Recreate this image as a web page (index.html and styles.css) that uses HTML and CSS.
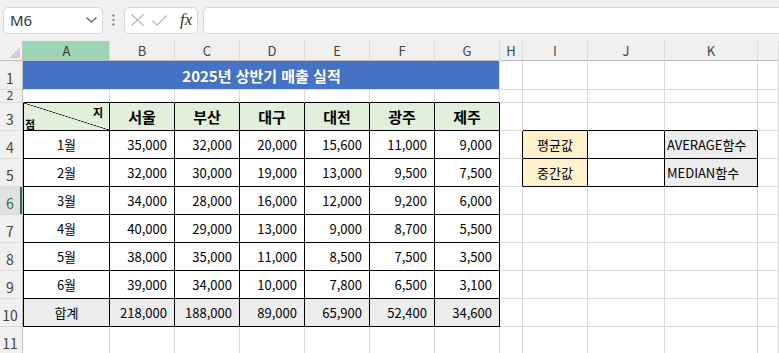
FILE: index.html
```html
<!DOCTYPE html>
<html lang="ko">
<head>
    <meta charset="UTF-8">
    <meta name="viewport" content="width=device-width, initial-scale=1.0">
    <title>2025년 상반기 매출 실적</title>
    <link rel="stylesheet" href="styles.css">
</head>
<body>
    <div class="toolbar">
        <div class="namebox">
            <span>M6</span>
            <svg width="11" height="6" viewBox="0 0 11 6"><polyline points="0.5,0.5 5.5,5 10.5,0.5" fill="none" stroke="#555" stroke-width="1.2"/></svg>
        </div>
        <div class="grip">
            <svg width="3" height="12" viewBox="0 0 3 12"><circle cx="1.5" cy="1.5" r="1.2" fill="#8a8a8a"/><circle cx="1.5" cy="6" r="1.2" fill="#8a8a8a"/><circle cx="1.5" cy="10.5" r="1.2" fill="#8a8a8a"/></svg>
        </div>
        <div class="fxbox">
            <svg width="13" height="12" viewBox="0 0 13 12"><path d="M0.5 0.5 L12.5 11.5 M12.5 0.5 L0.5 11.5" stroke="#b4b4b4" stroke-width="1.1" fill="none"/></svg>
            <svg width="15" height="11" viewBox="0 0 15 11"><polyline points="0.5,5.5 5,10.2 14.5,0.5" fill="none" stroke="#b4b4b4" stroke-width="1.1"/></svg>
            <span class="fx">fx</span>
        </div>
        <div class="formula"></div>
    </div>

    <table class="sheet">
        <tr class="r-ch">
            <th class="corner"><span class="tri"></span></th>
            <th class="ch ch-a">A</th>
            <th class="ch w65">B</th>
            <th class="ch w65">C</th>
            <th class="ch w65">D</th>
            <th class="ch w65">E</th>
            <th class="ch w65">F</th>
            <th class="ch w65">G</th>
            <th class="ch w23">H</th>
            <th class="ch w65">I</th>
            <th class="ch w77">J</th>
            <th class="ch w93">K</th>
            <th class="ch w21"></th>
        </tr>
        <tr class="r-1">
            <th class="rh">1</th>
            <td class="ca title" colspan="7">2025년 상반기 매출 실적</td>
            <td></td><td></td><td></td><td></td><td></td>
        </tr>
        <tr class="r-2">
            <th class="rh">2</th>
            <td class="ca top"></td><td class="top"></td><td class="top"></td><td class="top"></td><td class="top"></td><td class="top"></td><td class="top"></td>
            <td></td><td></td><td></td><td></td><td></td>
        </tr>
        <tr class="r">
            <th class="rh">3</th>
            <td class="ca bx hd diag">
                <div class="split"><span class="s-top">지</span><span class="s-bot">점</span></div>
            </td>
            <td class="bx hd">서울</td>
            <td class="bx hd">부산</td>
            <td class="bx hd">대구</td>
            <td class="bx hd">대전</td>
            <td class="bx hd">광주</td>
            <td class="bx hd">제주</td>
            <td></td><td class="top"></td><td class="top"></td><td class="top"></td><td></td>
        </tr>
        <tr class="r">
            <th class="rh">4</th>
            <td class="ca bx mon">1월</td>
            <td class="bx num">35,000</td><td class="bx num">32,000</td><td class="bx num">20,000</td><td class="bx num">15,600</td><td class="bx num">11,000</td><td class="bx num">9,000</td>
            <td class="edge"></td>
            <td class="bx lbl">평균값</td><td class="bx"></td><td class="bx fn">AVERAGE함수</td>
            <td></td>
        </tr>
        <tr class="r">
            <th class="rh">5</th>
            <td class="ca bx mon">2월</td>
            <td class="bx num">32,000</td><td class="bx num">30,000</td><td class="bx num">19,000</td><td class="bx num">13,000</td><td class="bx num">9,500</td><td class="bx num">7,500</td>
            <td class="edge"></td>
            <td class="bx lbl">중간값</td><td class="bx"></td><td class="bx fn">MEDIAN함수</td>
            <td></td>
        </tr>
        <tr class="r">
            <th class="rh cur">6</th>
            <td class="ca bx mon">3월</td>
            <td class="bx num">34,000</td><td class="bx num">28,000</td><td class="bx num">16,000</td><td class="bx num">12,000</td><td class="bx num">9,200</td><td class="bx num">6,000</td>
            <td></td><td></td><td></td><td></td><td></td>
        </tr>
        <tr class="r">
            <th class="rh">7</th>
            <td class="ca bx mon">4월</td>
            <td class="bx num">40,000</td><td class="bx num">29,000</td><td class="bx num">13,000</td><td class="bx num">9,000</td><td class="bx num">8,700</td><td class="bx num">5,500</td>
            <td></td><td></td><td></td><td></td><td></td>
        </tr>
        <tr class="r">
            <th class="rh">8</th>
            <td class="ca bx mon">5월</td>
            <td class="bx num">38,000</td><td class="bx num">35,000</td><td class="bx num">11,000</td><td class="bx num">8,500</td><td class="bx num">7,500</td><td class="bx num">3,500</td>
            <td></td><td></td><td></td><td></td><td></td>
        </tr>
        <tr class="r">
            <th class="rh">9</th>
            <td class="ca bx mon">6월</td>
            <td class="bx num">39,000</td><td class="bx num">34,000</td><td class="bx num">10,000</td><td class="bx num">7,800</td><td class="bx num">6,500</td><td class="bx num">3,100</td>
            <td></td><td></td><td></td><td></td><td></td>
        </tr>
        <tr class="r">
            <th class="rh">10</th>
            <td class="ca bx mon sum">합계</td>
            <td class="bx num sum">218,000</td><td class="bx num sum">188,000</td><td class="bx num sum">89,000</td><td class="bx num sum">65,900</td><td class="bx num sum">52,400</td><td class="bx num sum">34,600</td>
            <td></td><td></td><td></td><td></td><td></td>
        </tr>
        <tr class="r">
            <th class="rh">11</th>
            <td class="ca"></td><td></td><td></td><td></td><td></td><td></td><td></td>
            <td></td><td></td><td></td><td></td><td></td>
        </tr>
    </table>
</body>
</html>
```

FILE: styles.css
```css
body {
    margin: 0;
    width: 779px;
    height: 353px;
    overflow: hidden;
    background-color: #fff;
    font-family: "Noto Sans CJK KR", "Noto Sans", sans-serif;
    color: #000;
}

/* formula bar */
.toolbar {
    display: flex;
    align-items: center;
    height: 41px;
    padding: 0 0 1px 3px;
    box-sizing: border-box;
    background-color: #f0f0f0;
    overflow: hidden;
}

.namebox {
    width: 100px;
    height: 27px;
    box-sizing: border-box;
    display: flex;
    align-items: center;
    justify-content: space-between;
    padding: 0 5px 0 6px;
    background-color: #fff;
    border: 1px solid #d6d6d6;
    border-radius: 5px;
    font-family: "Noto Sans", sans-serif;
    font-size: 15px;
    color: #333;
}

.grip {
    width: 21px;
    display: flex;
    justify-content: center;
}

.fxbox {
    width: 74px;
    height: 27px;
    box-sizing: border-box;
    display: flex;
    align-items: center;
    gap: 8px;
    padding-left: 6px;
    background-color: #fff;
    border: 1px solid #d6d6d6;
    border-radius: 5px;
}

.fx {
    font-family: "Liberation Serif", serif;
    font-style: italic;
    font-size: 17px;
    color: #333;
    margin-left: 5px;
}

.formula {
    flex: 1;
    height: 27px;
    margin-left: 5px;
    box-sizing: border-box;
    background-color: #fff;
    border: 1px solid #d6d6d6;
    border-right: none;
    border-radius: 5px 0 0 5px;
}

/* sheet grid */
.sheet {
    width: 779px;
    table-layout: fixed;
    border-collapse: separate;
    border-spacing: 0;
    font-size: 13px;
}

.sheet th,
.sheet td {
    box-sizing: border-box;
    padding: 0;
    border-right: 1px solid #dadada;
    border-bottom: 1px solid #dadada;
    white-space: nowrap;
    overflow: hidden;
}

.r-ch { height: 19px; }
.r-1 { height: 29px; }
.r-2 { height: 13px; line-height: 12px; }
.r { height: 28px; }

.corner {
    width: 23px;
    position: relative;
    background-color: #f0f0f0;
    border-right-color: #c4c4c4 !important;
    border-bottom-color: #bdbdbd !important;
}

.tri {
    position: absolute;
    right: 2px;
    bottom: 2px;
    width: 0;
    height: 0;
    border-left: 11px solid transparent;
    border-bottom: 11px solid #d0d0d0;
}

.ch {
    background-color: #f0f0f0;
    font-weight: normal;
    font-size: 13px;
    color: #444;
    border-right-color: #dcdcdc !important;
    border-bottom-color: #bdbdbd !important;
}

.ch-a {
    width: 87px;
    background-color: #9fd5b7;
    border-left: 1px solid #9fd5b7;
    color: #333;
}

.w65 { width: 65px; }
.w23 { width: 23px; }
.w77 { width: 77px; }
.w93 { width: 93px; }
.w21 { width: 21px; }

.rh {
    background-color: #f0f0f0;
    font-weight: normal;
    font-size: 14px;
    line-height: 16px;
    color: #444;
    text-align: center;
    vertical-align: bottom;
    padding: 0 2px 3px 0 !important;
    border-right-color: #c4c4c4 !important;
    border-bottom-color: #dcdcdc !important;
}

.sheet .r-2 .rh {
    font-family: "Noto Sans", sans-serif;
    font-size: 12px;
    line-height: 12px;
    vertical-align: middle;
    padding-bottom: 0 !important;
    overflow: visible;
}

.rh.cur {
    background-color: #e1e1e1;
    color: #217346;
    box-shadow: inset -2px 0 0 #217346;
}

/* cells */
.ca {
    border-left: 1px solid #fff;
}

.title {
    background-color: #4472c4;
    border-left-color: #4472c4;
    color: #fff;
    font-weight: bold;
    font-size: 15px;
    text-align: center;
}

.top {
    border-bottom-color: #000 !important;
}

.bx {
    border-right-color: #000 !important;
    border-bottom-color: #000 !important;
}

.ca.bx {
    border-left-color: #000;
}

.edge {
    border-right-color: #000 !important;
}

.hd {
    background-color: #e2efda;
    font-weight: bold;
    font-size: 15px;
    text-align: center;
}

.diag {
    background: linear-gradient(to top right, #e2efda calc(50% - 0.6px), #000 50%, #e2efda calc(50% + 0.6px));
}

.split {
    display: flex;
    flex-direction: column;
    height: 27px;
    font-size: 11px;
    line-height: 12px;
}

.s-top {
    align-self: flex-end;
    margin: 3px 6px 0 0;
}

.s-bot {
    align-self: flex-start;
    margin: auto 0 1px 1px;
}

.mon {
    text-align: center;
}

.num {
    text-align: right;
    padding-right: 7px !important;
}

.sum {
    background-color: #ededed;
}

.lbl {
    background-color: #fff2cc;
    text-align: center;
}

.fn {
    background-color: #ededed;
    padding-left: 2px !important;
}
```
